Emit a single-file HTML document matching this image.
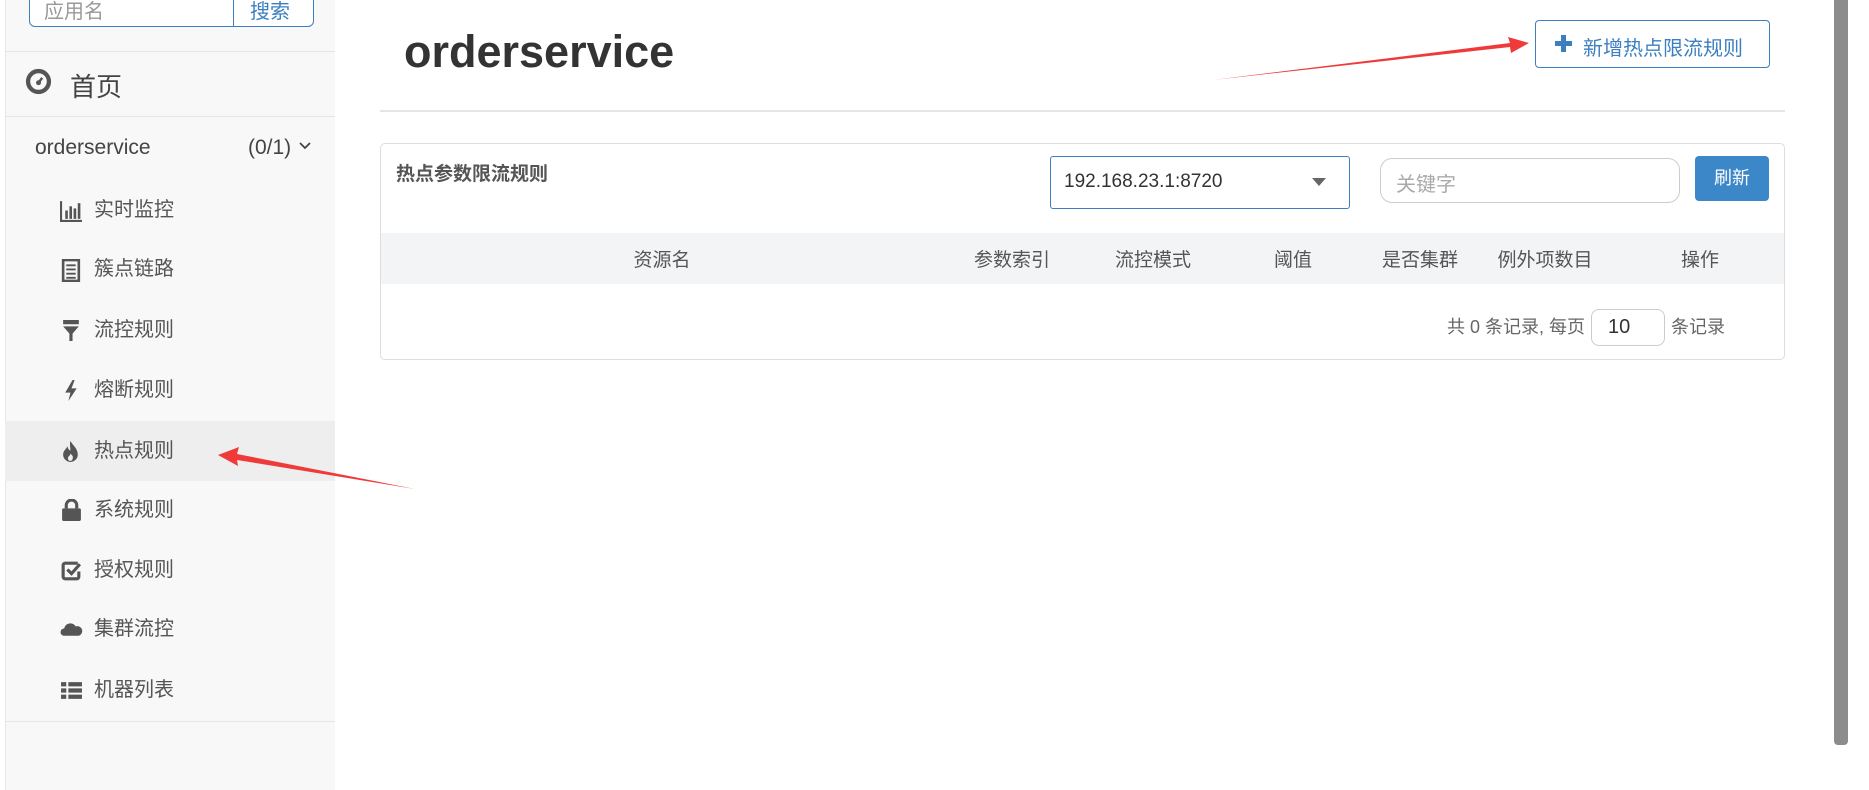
<!DOCTYPE html>
<html><head><meta charset="utf-8"><style>
*{box-sizing:border-box;margin:0;padding:0}
body{width:1869px;height:790px;position:relative;overflow:hidden;background:#fff;font-family:"Liberation Sans","Noto Sans CJK SC",sans-serif;color:#333}
.a{position:absolute}
.side{left:5px;top:0;width:330px;height:790px;background:#f8f8f8;border-left:1px solid #e7e7e7}
.hl{left:5px;top:421px;width:330px;height:60px;background:#eeeeee}
.mi{position:absolute;left:94px;font-size:20px;color:#555;line-height:24px}
.ic{position:absolute;left:60px;width:23px;height:23px}
.th{position:absolute;top:245px;font-size:19px;color:#555;transform:translateX(-50%);white-space:nowrap}
</style></head><body>
<div class="a side"></div>
<div class="a" style="left:29px;top:-10px;width:285px;height:37px;border:1px solid #3c7fc0;border-radius:0 0 6px 6px;background:#fff"></div>
<div class="a" style="left:233px;top:-10px;width:1px;height:37px;background:#3c7fc0"></div>
<div class="a" style="left:44px;top:-5px;font-size:20px;color:#999">应用名</div>
<div class="a" style="left:250px;top:-5px;font-size:20px;color:#3c7fc0">搜索</div>
<div class="a" style="left:5px;top:51px;width:330px;height:1px;background:#e5e5e5"></div>
<svg class="a" style="left:25px;top:68px" width="27" height="27" viewBox="0 0 22 22"><circle cx="11" cy="11" r="8.5" fill="none" stroke="#555" stroke-width="3.5"/><circle cx="11" cy="12" r="2" fill="#555"/><path d="M11 12 L14 8" stroke="#555" stroke-width="2"/></svg>
<div class="a" style="left:70px;top:67px;font-size:26px;color:#444">首页</div>
<div class="a" style="left:5px;top:116px;width:330px;height:1px;background:#e5e5e5"></div>
<div class="a" style="left:35px;top:136px;font-size:21px;color:#444">orderservice</div>
<div class="a" style="left:248px;top:136px;font-size:21px;color:#444">(0/1)</div>
<svg class="a" style="left:299px;top:141px" width="12" height="10"><path d="M1 2 L6 7 L11 2" fill="none" stroke="#444" stroke-width="1.8"/></svg>
<div class="a hl"></div>
<svg class="ic" style="top:199px" viewBox="0 0 22 22"><path d="M1 2V21H21" fill="none" stroke="#555" stroke-width="2"/><rect x="5" y="11" width="2.5" height="8" fill="#555"/><rect x="9" y="7" width="2.5" height="12" fill="#555"/><rect x="13" y="9" width="2.5" height="10" fill="#555"/><rect x="17" y="4" width="2.5" height="15" fill="#555"/></svg>
<svg class="ic" style="top:259px" viewBox="0 0 22 22"><rect x="3" y="1" width="15" height="20" fill="none" stroke="#555" stroke-width="2.5"/><path d="M6 6h9M6 10h9M6 14h9M6 18h9" stroke="#555" stroke-width="1.8"/></svg>
<svg class="ic" style="top:319px" viewBox="0 0 22 22"><path d="M3 1H18V5H3Z M3 7H18L12 14V21H9V14Z" fill="#555"/></svg>
<svg class="ic" style="top:379px" viewBox="0 0 22 22"><path d="M12 1L5 13H10L8 21L16 9H11L14 1Z" fill="#555"/></svg>
<svg class="ic" style="top:440px" viewBox="0 0 22 22"><path d="M10 1C12 5 17 8 17 14A7 7 0 0 1 3 14C3 10 6 9 7 6C8 9 9 10 10 10C10 7 9 4 10 1Z" fill="#555"/><path d="M10 20C8 20 7 18 8 16C9 15 10 14 10 13C12 15 13 16 12 18C12 19 11 20 10 20Z" fill="#eee"/></svg>
<svg class="ic" style="top:499px" viewBox="0 0 22 22"><path d="M6 9V6A5 5 0 0 1 16 6V9" fill="none" stroke="#555" stroke-width="3"/><rect x="2" y="9" width="18" height="12" rx="1.5" fill="#555"/></svg>
<svg class="ic" style="top:559px" viewBox="0 0 22 22"><path d="M17 4H5A2 2 0 0 0 3 6V17A2 2 0 0 0 5 19H16A2 2 0 0 0 18 17V12" fill="none" stroke="#555" stroke-width="3"/><path d="M7 10L11 14L19 5" fill="none" stroke="#555" stroke-width="3"/></svg>
<svg class="ic" style="top:618px" viewBox="0 0 22 22"><path d="M4 17A3.5 3.5 0 0 1 4 10A6 6 0 0 1 15 8A4.5 4.5 0 0 1 18 17Z" fill="#555"/></svg>
<svg class="ic" style="top:679px" viewBox="0 0 22 22"><path d="M1 3h5v4H1zM8 3h13v4H8zM1 9h5v4H1zM8 9h13v4H8zM1 15h5v4H1zM8 15h13v4H8z" fill="#555"/></svg>
<div class="mi" style="top:198px">实时监控</div>
<div class="mi" style="top:257px">簇点链路</div>
<div class="mi" style="top:318px">流控规则</div>
<div class="mi" style="top:378px">熔断规则</div>
<div class="mi" style="top:439px">热点规则</div>
<div class="mi" style="top:498px">系统规则</div>
<div class="mi" style="top:558px">授权规则</div>
<div class="mi" style="top:617px">集群流控</div>
<div class="mi" style="top:678px">机器列表</div>
<div class="a" style="left:5px;top:721px;width:330px;height:1px;background:#e5e5e5"></div>
<div class="a" style="left:404px;top:26px;font-size:45px;font-weight:bold;color:#333">orderservice</div>
<div class="a" style="left:1535px;top:20px;width:235px;height:48px;border:1px solid #3c7fc0;border-radius:4px;background:#fff"></div>
<svg class="a" style="left:1555px;top:35px" width="17" height="17"><path d="M6 0h5v6h6v5h-6v6H6v-6H0V6h6z" fill="#3c7fc0"/></svg>
<div class="a" style="left:1583px;top:32px;font-size:20px;color:#3c7fc0">新增热点限流规则</div>
<div class="a" style="left:380px;top:110px;width:1405px;height:2px;background:#e5e5e5"></div>
<div class="a" style="left:380px;top:143px;width:1405px;height:217px;border:1px solid #ddd;border-radius:5px"></div>
<div class="a" style="left:396px;top:159px;font-size:19px;font-weight:bold;color:#555">热点参数限流规则</div>
<div class="a" style="left:1050px;top:156px;width:300px;height:53px;border:1px solid #3c7fc0;border-radius:3px"></div>
<div class="a" style="left:1064px;top:171px;font-size:19px;color:#333">192.168.23.1:8720</div>
<svg class="a" style="left:1312px;top:178px" width="14" height="9"><path d="M0 0H14L7 8Z" fill="#666"/></svg>
<div class="a" style="left:1380px;top:158px;width:300px;height:45px;border:1px solid #ccc;border-radius:12px"></div>
<div class="a" style="left:1396px;top:168px;font-size:20px;color:#aaa">关键字</div>
<div class="a" style="left:1695px;top:156px;width:74px;height:45px;background:#3c87c8;border-radius:4px;color:#fff;font-size:18px;text-align:center;line-height:45px">刷新</div>
<div class="a" style="left:381px;top:233px;width:1403px;height:51px;background:#f3f4f6"></div>
<div class="th" style="left:662px">资源名</div>
<div class="th" style="left:1012px">参数索引</div>
<div class="th" style="left:1153px">流控模式</div>
<div class="th" style="left:1293px">阈值</div>
<div class="th" style="left:1420px">是否集群</div>
<div class="th" style="left:1545px">例外项数目</div>
<div class="th" style="left:1700px">操作</div>
<div class="a" style="left:1447px;top:313px;font-size:18px;color:#666">共 0 条记录, 每页</div>
<div class="a" style="left:1591px;top:309px;width:74px;height:37px;border:1px solid #ccc;border-radius:8px;font-size:20px;line-height:35px;padding-left:16px;color:#333">10</div>
<div class="a" style="left:1671px;top:313px;font-size:18px;color:#666">条记录</div>
<div class="a" style="left:1834px;top:0;width:14px;height:745px;background:#8c8c8c;border-radius:0 0 4px 4px"></div>
<div class="a" style="left:1848px;top:0;width:21px;height:790px;background:#fff"></div>
<svg class="a" style="left:0;top:0" width="1869" height="790">
<path d="M1213 80 L1510 43 L1508 37 L1529 43 L1511 53 L1510 47 Z" fill="#f03a3a"/>
<path d="M415 489 L237 460 L238 466 L218 455 L239 447 L237 454 Z" fill="#f03a3a"/>
</svg>
</body></html>
